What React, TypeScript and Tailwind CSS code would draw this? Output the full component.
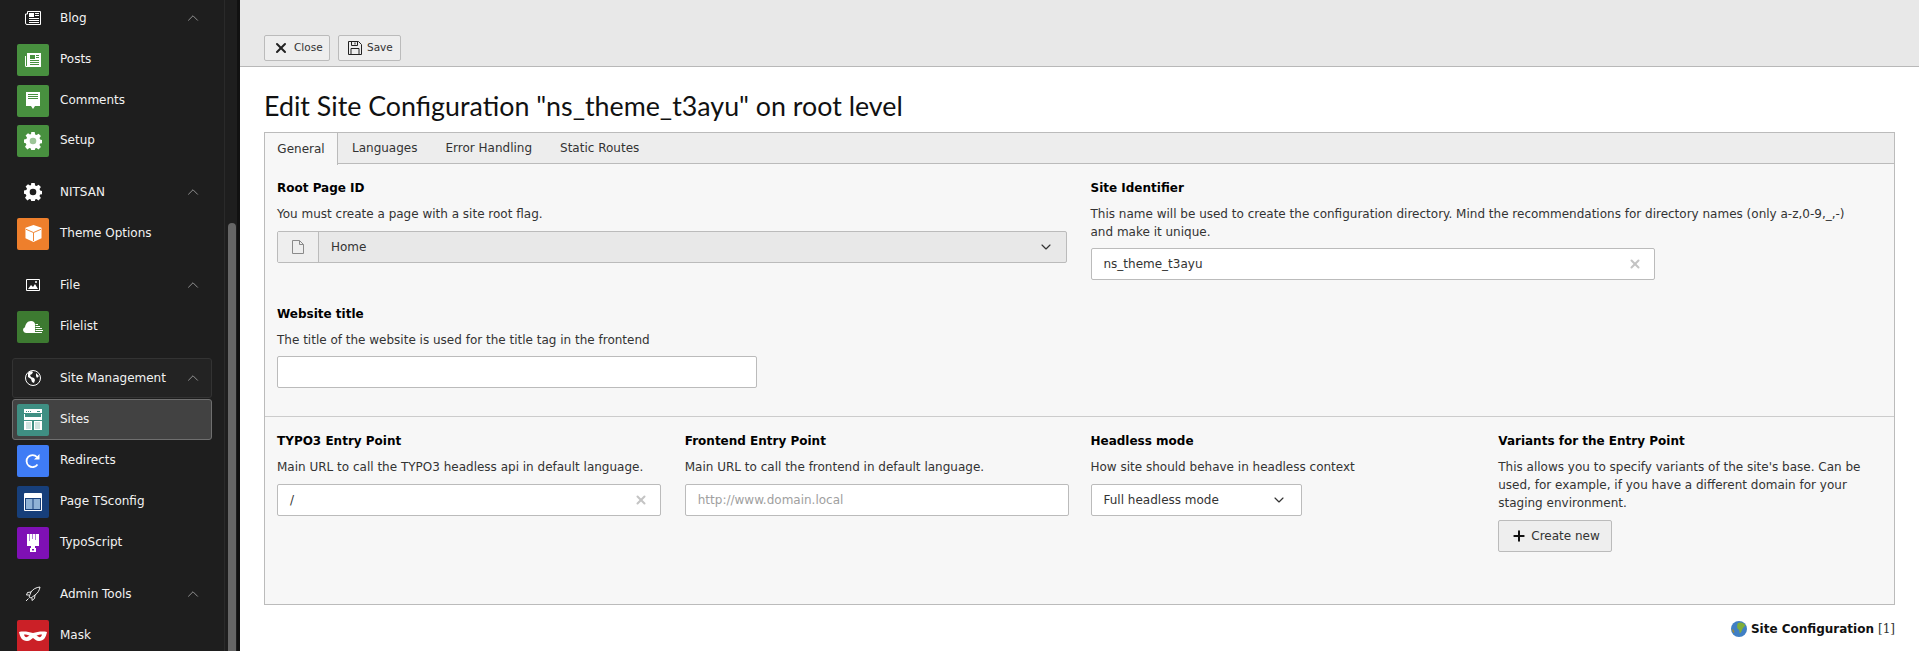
import { ChevronUp, ChevronDown, X, Plus } from "lucide-react";
import type { ReactNode } from "react";

const Box = ({ bg, children }: { bg: string; children: ReactNode }) => (
  <span className={`w-8 h-8 rounded-[2px] flex items-center justify-center shrink-0 ${bg}`}>{children}</span>
);

const PostsIcon = () => (
  <svg width="16" height="14" viewBox="0 0 16 14"><path fill="#fff" d="M3 0h13v14H1.500C.7 14 0 13.300 0 12.500V3h1v9.500a.5.5 0 0 0 1 0V0z" /><path fill="#48903f" d="M5 2h5v4H5zM11 2h3v1h-3zM11 4h3v1h-3zM5 7h9v1H5zM5 9h9v1H5zM5 11h9v1H5z" /></svg>
);
const CommentsIcon = () => (
  <svg width="14" height="17" viewBox="0 0 14 17"><path fill="#fff" d="M0 0h14v14H9l-2 3-2-3H0z" /><path fill="#48903f" d="M2 2h10v1H2zM2 4h10v1H2zM2 6h10v1H2z" /></svg>
);
const Gear = ({ hole }: { hole: string }) => (
  <svg width="18" height="18" viewBox="0 0 18 18">
    <path fill="#fff" d="M7.300 0h3.400l.4 2.400 1.500.7 2-1.400 2.300 2.400-1.400 2 .6 1.500 2.400.4v3.200l-2.400.4-.6 1.500 1.400 2-2.400 2.300-2-1.400-1.400.6-.4 2.400H7.300l-.4-2.400-1.500-.6-2 1.400L1 14.700l1.400-2-.6-1.500L0 10.800V7.400l2.400-.4.6-1.500-1.400-2L4 1.200l2 1.400 1-.6z" />
    <circle cx="9" cy="9" r="3.300" fill={hole} />
  </svg>
);
const CubeIcon = () => (
  <svg width="17" height="17" viewBox="0 0 18 18"><path fill="#fff" d="M9 0l8.500 3v11L9 18 .5 14V3z" /><path fill="none" stroke="#ee7f2c" strokeWidth="1" d="M1 4.500L9 8l8-3.500M9 8v9" /></svg>
);
const FilelistIcon = () => (
  <svg width="20" height="12" viewBox="0 0 20 12"><path fill="#fff" d="M3 12a3 3 0 0 1-1-5.800C2.500 3 4.500 0 8 0c2.500 0 4 1.500 4 3v9z" /><path fill="#fff" d="M12.500 3H15v1h-2.500zM12.500 5H17v1h-4.500zM12.500 7H19v1h-6.500zM12.500 9H20v1h-7.500zM11 11h8v1h-8z" /></svg>
);
const SitesIcon = () => (
  <svg width="18" height="21" viewBox="0 0 18 21">
    <path fill="#fff" d="M0 0h18v21H0z" />
    <path fill="#3f8f83" d="M2 2h1v1H2zM4 2h1v1H4zM6 2h1v1H6zM13 2h3v1h-3zM0 4h18v1H0zM1 5h16v3H1zM0 11h18v1H0zM8 12h2v9H8z" />
    <path fill="#cfe4e0" d="M2 13h5v7H2zM11 13h5v7h-5z" />
  </svg>
);
const RedirectIcon = () => (
  <svg width="16" height="16" viewBox="0 0 16 16"><path fill="none" stroke="#fff" strokeWidth="1.800" d="M12.500 11.500a6 6 0 1 1-.5-7.500" /><path fill="#fff" d="M14.500 1v5.500H9z" /></svg>
);
const TsConfigIcon = () => (
  <svg width="18" height="18" viewBox="0 0 18 18"><path fill="none" stroke="#fff" d="M.5.500h17v17H.5z" /><path fill="#fff" d="M1 1h16v4H1z" /><path fill="#8fb2d6" d="M2 6h6.500v10H2zM9.500 6H16v10H9.500z" /></svg>
);
const TypoScriptIcon = () => (
  <svg width="12" height="18" viewBox="0 0 12 18"><path fill="#fff" d="M0 0h12v12H8v2h1v4H3v-4h1v-2H0z" /><path fill="#b481d9" d="M2 0h1v7H2zM5 0h1v5H5zM8 0h1v6H8z" /><path fill="#7f10b5" d="M5 15h2v1.500H5z" /></svg>
);
const MaskIcon = () => (
  <svg width="28" height="12" viewBox="0 0 28 12"><path fill="#fff" d="M0 2c5-1 10 0 14 1 4-1 9-2 14-1-1 5-3 9-8 9-3 0-4-2-6-3-2 1-3 3-6 3-5 0-7-4-8-9z" /><path fill="#cb2027" d="M5 4.500c2 0 4 .5 5.500 1-1 1-3 2-4 1.500-.7-.5-1.300-1.500-1.500-2.500zM23 4.500c-2 0-4 .5-5.500 1 1 1 3 2 4 1.500.7-.5 1.300-1.500 1.500-2.500z" /></svg>
);
const NewsIcon = () => (
  <svg width="16" height="14" viewBox="0 0 16 14"><path fill="none" stroke="#fff" d="M2.500.500h13v13H2a1.500 1.500 0 0 1-1.500-1.500V3h2z" /><path fill="#fff" d="M4 2h5v4H4zM10 2h4v1h-4zM10 4h4v1h-4zM4 7h10v1H4zM4 9h10v1H4zM4 11h10v1H4z" /></svg>
);
const ImageIcon = () => (
  <svg width="14" height="12" viewBox="0 0 14 12"><path fill="none" stroke="#fff" d="M.5.500h13v11H.5z" /><path fill="#fff" d="M2 10l3-4 2 2 2-3 3 5z" /><circle cx="10" cy="3" r="1" fill="#fff" /></svg>
);
const GlobeIcon = () => (
  <svg width="16" height="16" viewBox="0 0 16 16"><circle cx="8" cy="8" r="7.500" fill="none" stroke="#fff" /><path fill="#fff" d="M3 3c2-2 4-2 5-1l-1 2-2 1 1 2 3 1 1 2-1 3-2-1-1-3-3-2zM11 3l3 3-2 2-1-2z" /></svg>
);
const RocketIcon = () => (
  <svg width="16" height="16" viewBox="0 0 16 16" fill="none" stroke="#fff" strokeWidth="0.900"><path d="M15 1c-4 .5-7 2-9 5L4 11l2 1 4-3c3-2 4.500-5 5-8z" /><path d="M6 6L2.500 6.500 1.500 9 4 9M10 9l-.5 3.500L7 14.500V12M3.500 12.500L1 15" /></svg>
);
const FooterGlobe = () => (
  <svg width="16" height="16" viewBox="0 0 16 16"><circle cx="8" cy="8" r="8" fill="#3f7fc4" /><path fill="#7fae3a" d="M7 2c3-1.500 6 0 7.500 2.500C13 6 11.500 7 11 9c-.5 2-1.500 3-2.500 3.500C9 10 8 8.500 6.500 7.500 6 6 6 3.500 7 2z" /><path fill="#9a8a3a" d="M1 8c1 0 2 1 2.500 3l-1 1C1.500 11 1 9.500 1 8z" /></svg>
);

const Head = ({ icon, label, boxed }: { icon: ReactNode; label: string; boxed?: boolean }) => (
  <div className={`h-10 flex items-center rounded-[3px] mx-3 pl-1 border ${boxed ? "border-[#333333] bg-[#232323]" : "border-transparent"}`}>
    <span className="w-8 flex items-center justify-center shrink-0">{icon}</span>
    <span className="ml-[11px] text-xs text-[#f2f2f2] flex-1 mb-px">{label}</span>
    <ChevronUp size={18} strokeWidth={1} className="text-[#b4b4b4] mr-[9px]" />
  </div>
);

const Item = ({ icon, label, active }: { icon: ReactNode; label: string; active?: boolean }) => (
  <div className={`h-[41px] flex items-center rounded-[3px] mx-3 pl-1 border ${active ? "border-[#6f6f6f] bg-[#424242]" : "border-transparent"}`}>
    {icon}
    <span className="ml-[11px] text-xs text-[#f2f2f2] mb-px">{label}</span>
  </div>
);

const Label = ({ children }: { children: ReactNode }) => (
  <div className="text-xs font-bold text-[#000000] leading-[16px]">{children}</div>
);
const Desc = ({ children }: { children: ReactNode }) => (
  <div className="text-xs text-[#333333] leading-[18px] mt-[9px]">{children}</div>
);
const Input = ({ value, placeholder, width, clear }: { value?: string; placeholder?: string; width: string; clear?: boolean }) => (
  <div className={`h-8 ${width} bg-white border border-[#bbbbbb] rounded-[2px] flex items-center pl-3 pr-3 text-xs text-[#333333]`}>
    <span className={`flex-1 ${placeholder ? "text-[#a0a0a0]" : ""}`}>{value ?? placeholder}</span>
    {clear && <X size={14} strokeWidth={3.5} className="text-[#c4c4c4]" />}
  </div>
);

export default function App() {
  return (
    <div className="h-[651px] w-full flex overflow-hidden bg-white font-['DejaVu_Sans',sans-serif]">
      <aside className="w-[240px] shrink-0 flex bg-[#1e1e1e] border-r-[3px] border-[#111111]">
        <nav className="w-[225px] shrink-0 -mt-[2px] flex flex-col gap-[11px] border-r border-[#2a2a2a]">
          <div className="flex flex-col">
            <Head icon={<NewsIcon />} label="Blog" />
            <div className="pt-px">
              <Item icon={<Box bg="bg-[#48903f]"><PostsIcon /></Box>} label="Posts" />
              <Item icon={<Box bg="bg-[#48903f]"><CommentsIcon /></Box>} label="Comments" />
              <div className="-mt-px">
                <Item icon={<Box bg="bg-[#48903f]"><Gear hole="#9cc597" /></Box>} label="Setup" />
              </div>
            </div>
          </div>
          <div className="flex flex-col gap-px">
            <Head icon={<Gear hole="#1e1e1e" />} label="NITSAN" />
            <Item icon={<Box bg="bg-[#ee7f2c]"><CubeIcon /></Box>} label="Theme Options" />
          </div>
          <div className="flex flex-col gap-px">
            <Head icon={<ImageIcon />} label="File" />
            <Item icon={<Box bg="bg-[#3d7a31]"><FilelistIcon /></Box>} label="Filelist" />
          </div>
          <div className="flex flex-col gap-px">
            <Head icon={<GlobeIcon />} label="Site Management" boxed />
            <div>
              <Item icon={<Box bg="bg-[#3f8f83]"><SitesIcon /></Box>} label="Sites" active />
              <Item icon={<Box bg="bg-[#3f7cf5]"><RedirectIcon /></Box>} label="Redirects" />
              <Item icon={<Box bg="bg-[#173f7a]"><TsConfigIcon /></Box>} label="Page TSconfig" />
              <Item icon={<Box bg="bg-[#7f10b5]"><TypoScriptIcon /></Box>} label="TypoScript" />
            </div>
          </div>
          <div className="flex flex-col gap-px">
            <Head icon={<RocketIcon />} label="Admin Tools" />
            <Item icon={<Box bg="bg-[#cb2027]"><MaskIcon /></Box>} label="Mask" />
          </div>
        </nav>
        <div className="flex-1 pt-[223px] pl-[3px] flex flex-col">
          <div className="flex-1 w-2 bg-[#666666] rounded-t-[4px]" />
        </div>
      </aside>

      <main className="flex-1 min-w-0 flex flex-col">
        <div className="h-[67px] shrink-0 bg-[#e8e8e8] border-b border-[#b8b8b8] pl-6 pt-[35px] flex items-start gap-2">
          <button className="h-[26px] w-[66px] flex items-center pl-2 gap-[5px] bg-[#eeeeee] border border-[#bbbbbb] rounded-[2px] text-[10.5px] text-[#333333]">
            <X size={16} strokeWidth={3} className="text-[#222222]" />Close
          </button>
          <button className="h-[26px] w-[63px] flex items-center pl-[9px] gap-[5px] bg-[#eeeeee] border border-[#bbbbbb] rounded-[2px] text-[10.5px] text-[#333333]">
            <svg width="14" height="14" viewBox="0 0 14 14" fill="none" stroke="#222222"><path d="M.5.500h10l3 3v10H.5z" /><path d="M3.500.500v4h6v-4M7 1.500v2M3 13.500v-6h8v6" /></svg>
            Save
          </button>
        </div>

        <div className="flex-1 px-6 pt-[21px]">
          <h1 className="font-['Lato',sans-serif] text-[26.8px] leading-[36px] text-[#111111] mb-[8px]">
            Edit Site Configuration "ns_theme_t3ayu" on root level
          </h1>

          <div className="border border-[#bbbbbb] bg-[#f7f7f7]">
            <div className="h-[31px] flex bg-[#ededed] border-b border-[#bbbbbb] text-xs text-[#333333]">
              <div className="h-[32px] w-[73px] flex items-center justify-center bg-[#f7f7f7] border-r border-[#bbbbbb]">General</div>
              <div className="h-full flex items-center pl-[14px] gap-7">
                <span>Languages</span>
                <span>Error Handling</span>
                <span>Static Routes</span>
              </div>
            </div>

            <div className="grid grid-cols-2 gap-x-6 pl-3 pr-[14px] pt-[16px] h-[253px] border-b border-[#cccccc] content-start">
              <div>
                <Label>Root Page ID</Label>
                <Desc>You must create a page with a site root flag.</Desc>
                <div className="mt-[8px] h-8 flex bg-[#e8e8e8] border border-[#bbbbbb] rounded-[2px] text-xs text-[#333333]">
                  <span className="w-[41px] flex items-center justify-center bg-[#eeeeee] border-r border-[#bbbbbb]">
                    <svg width="12" height="14" viewBox="0 0 12 14" fill="none" stroke="#8a8a8a"><path d="M.5.500h7l4 4v9H.5zM7.500.500v4h4" /></svg>
                  </span>
                  <span className="flex-1 pl-3 flex items-center">Home</span>
                  <ChevronDown size={16} strokeWidth={1.75} className="self-center mr-[12px] text-[#333333]" />
                </div>
                <div className="mt-[43px]">
                  <Label>Website title</Label>
                  <Desc>The title of the website is used for the title tag in the frontend</Desc>
                  <div className="mt-[7px]"><Input width="w-[480px]" value="" /></div>
                </div>
              </div>
              <div>
                <Label>Site Identifier</Label>
                <Desc>
                  This name will be used to create the configuration directory. Mind the recommendations for directory names (only a-z,0-9,_,-)<br />and make it unique.
                </Desc>
                <div className="mt-[7px]"><Input width="w-[564px]" value="ns_theme_t3ayu" clear /></div>
              </div>
            </div>

            <div className="grid grid-cols-4 gap-x-6 pl-3 pr-[10px] pt-[16px] h-[187px]">
              <div>
                <Label>TYPO3 Entry Point</Label>
                <Desc>Main URL to call the TYPO3 headless api in default language.</Desc>
                <div className="mt-[8px]"><Input width="w-full" value="/" clear /></div>
              </div>
              <div>
                <Label>Frontend Entry Point</Label>
                <Desc>Main URL to call the frontend in default language.</Desc>
                <div className="mt-[8px]"><Input width="w-full" placeholder="http://www.domain.local" /></div>
              </div>
              <div className="-ml-[2px]">
                <Label>Headless mode</Label>
                <Desc>How site should behave in headless context</Desc>
                <div className="mt-[8px] h-8 w-[211px] bg-white border border-[#bbbbbb] rounded-[2px] flex items-center pl-3 pr-[14px] text-xs text-[#333333]">
                  <span className="flex-1">Full headless mode</span>
                  <ChevronDown size={16} strokeWidth={1.75} className="text-[#333333]" />
                </div>
              </div>
              <div className="-ml-[2px]">
                <Label>Variants for the Entry Point</Label>
                <Desc>This allows you to specify variants of the site's base. Can be used, for example, if you have a different domain for your staging environment.</Desc>
                <button className="mt-[8px] h-8 w-[114px] flex items-center pl-3 gap-1 bg-[#eeeeee] border border-[#bbbbbb] rounded-[2px] text-xs text-[#333333]">
                  <Plus size={16} strokeWidth={3} className="text-[#111111]" />Create new
                </button>
              </div>
            </div>
          </div>

          <div className="mt-4 flex items-center justify-end gap-1 text-xs text-[#333333]">
            <FooterGlobe />
            <b className="text-[#111111]">Site Configuration</b>
            <span className="font-['DejaVu_Serif',serif]">[1]</span>
          </div>
        </div>
      </main>
    </div>
  );
}
